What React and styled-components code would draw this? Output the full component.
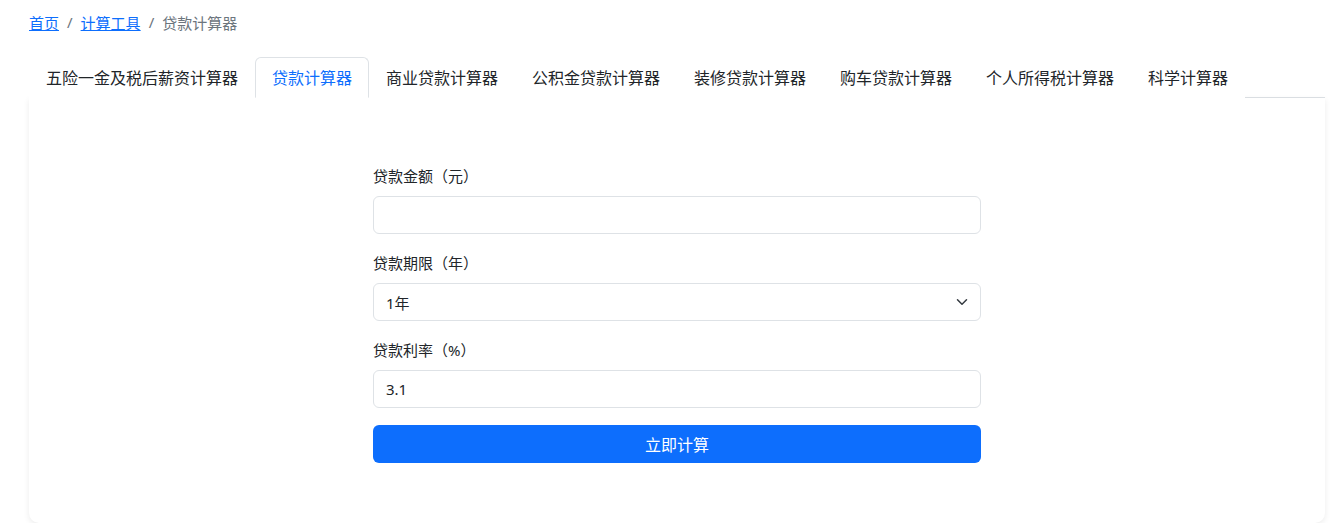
import React from "react";
import styled, { createGlobalStyle } from "styled-components";

const G = createGlobalStyle`
  body { margin: 0; background: #fff; font-family: "Noto Sans", "Noto Sans CJK SC", sans-serif; color: #212529; }
  * { box-sizing: border-box; }
`;
const Page = styled.div` padding: 10px 10px 0 29px; width: 1335px; padding-right: 10px; `;
const Crumbs = styled.div` display: flex; align-items: center; gap: 8px; font-size: 15px; height: 24px; color: #6c757d; margin-bottom: 23px; `;
const Link = styled.a` color: #0d6efd; text-decoration: underline; `;
const Tabs = styled.div` display: flex; border-bottom: 1px solid #dee2e6; width: 1296px; `;
const Tab = styled.div`
  padding: 0 16px; height: 41px; line-height: 40px; font-size: 16px; margin-bottom: -1px;
  color: ${p => p.active ? "#0d6efd" : "#212529"};
  border: 1px solid ${p => p.active ? "#dee2e6" : "transparent"};
  border-bottom-color: ${p => p.active ? "#fff" : "transparent"};
  border-radius: 6px 6px 0 0; background: #fff;
`;
const Card = styled.div`
  width: 1296px; height: 425px; border-radius: 0 0 10px 10px; background: #fff;
  box-shadow: 0 2px 6px rgba(0,0,0,0.08);
  display: flex; justify-content: center; padding-top: 66px;
`;
const Form = styled.div` width: 608px; display: flex; flex-direction: column; `;
const Label = styled.div` font-size: 15px; line-height: 24px; margin-bottom: 8px; `;
const Field = styled.div`
  height: 38px; border: 1px solid #dee2e6; border-radius: 6px; padding: 0 12px;
  display: flex; align-items: center; justify-content: space-between; font-size: 15px; margin-bottom: 17px;
`;
const Button = styled.div`
  height: 38px; border-radius: 6px; background: #0d6efd; color: #fff; font-size: 16px;
  display: flex; align-items: center; justify-content: center;
`;

const tabs = ["五险一金及税后薪资计算器","贷款计算器","商业贷款计算器","公积金贷款计算器","装修贷款计算器","购车贷款计算器","个人所得税计算器","科学计算器"];

export default function App() {
  return (
    <Page>
      <G />
      <Crumbs><Link>首页</Link><span>/</span><Link>计算工具</Link><span>/</span><span>贷款计算器</span></Crumbs>
      <Tabs>{tabs.map((t, i) => <Tab key={t} active={i === 1}>{t}</Tab>)}</Tabs>
      <Card>
        <Form>
          <Label>贷款金额（元）</Label>
          <Field />
          <Label>贷款期限（年）</Label>
          <Field>1年<svg width="12" height="12" viewBox="0 0 16 16" fill="none" stroke="#343a40" strokeWidth="2" strokeLinecap="round" strokeLinejoin="round"><path d="M2 5l6 6 6-6" /></svg></Field>
          <Label>贷款利率（%）</Label>
          <Field>3.1</Field>
          <Button>立即计算</Button>
        </Form>
      </Card>
    </Page>
  );
}
